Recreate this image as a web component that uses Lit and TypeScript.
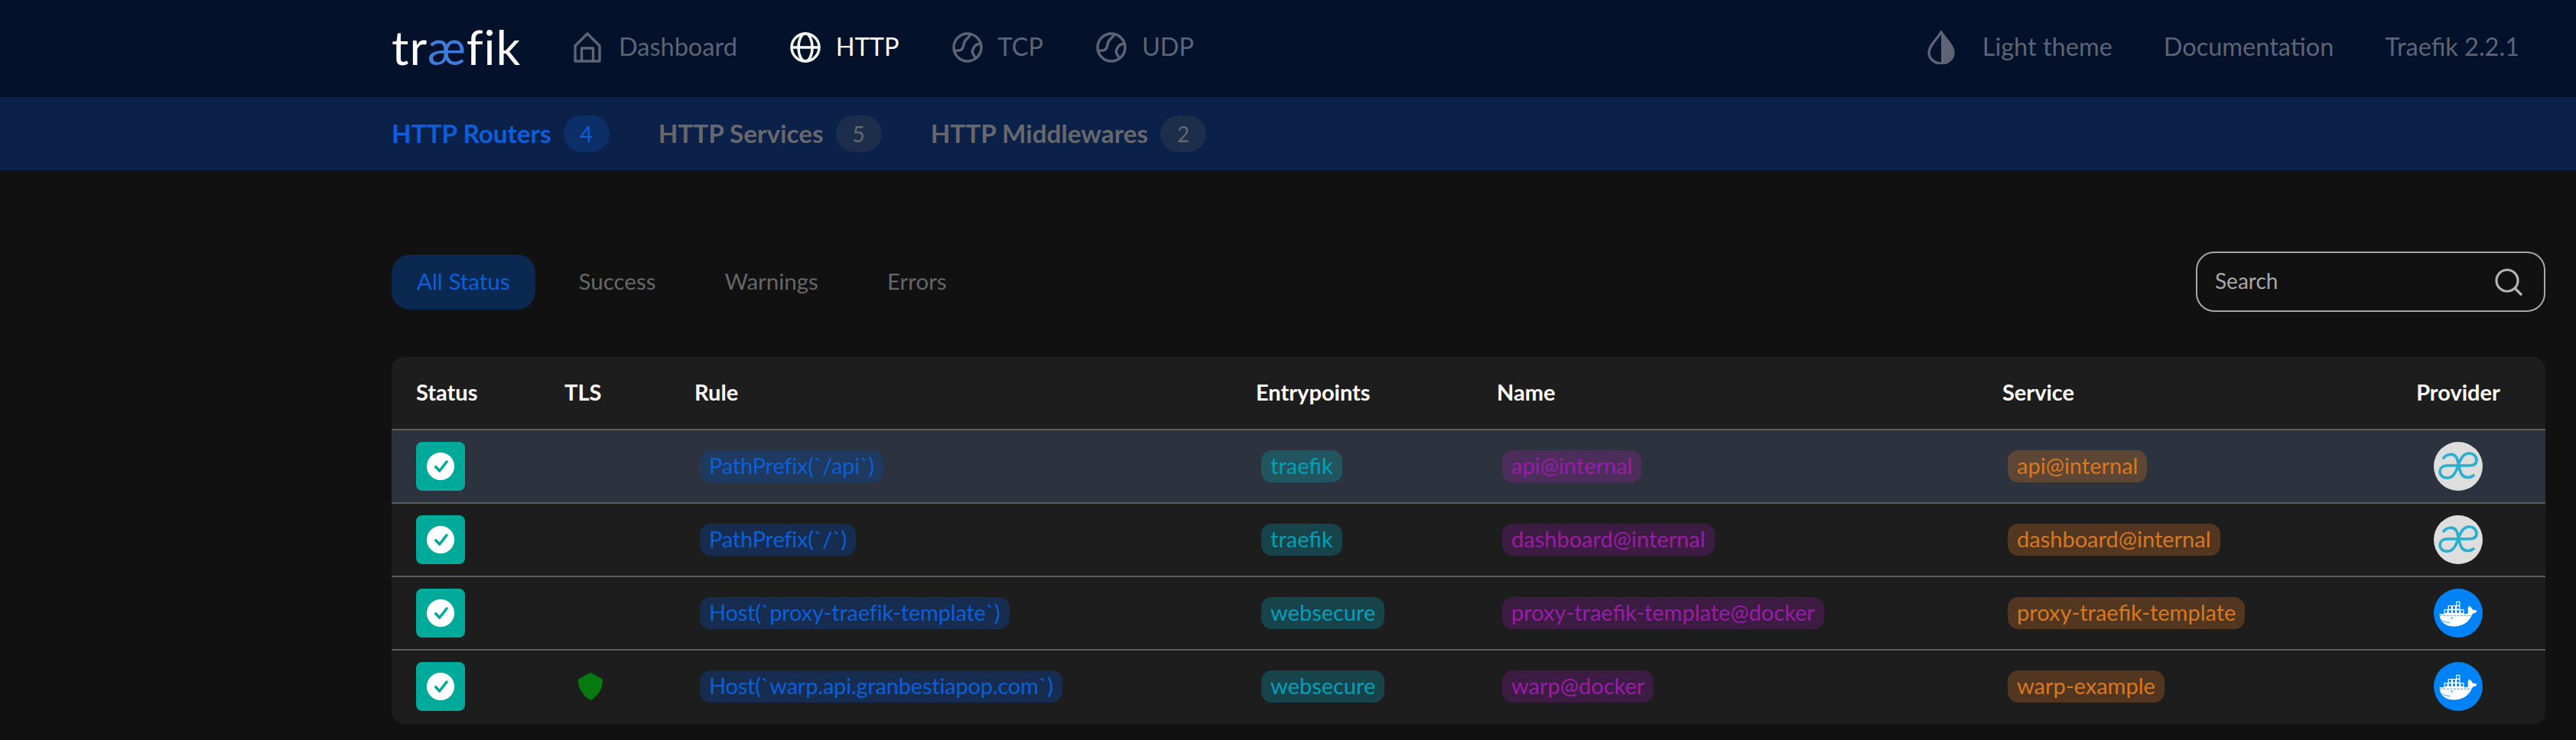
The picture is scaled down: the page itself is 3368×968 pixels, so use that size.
import { LitElement, css, html, svg } from "lit";
import { customElement } from "lit/decorators.js";

const homeIcon = svg`<svg class="nav-icon home" viewBox="0 0 36 40" fill="none" stroke="currentColor" stroke-width="3.4" stroke-linejoin="round"><path d="M2 38V18L18 2l16 16v20z"/><path d="M10.500 38V21h15v17"/></svg>`;
const globeIcon = svg`<svg class="nav-icon" viewBox="0 0 40 40" fill="none" stroke="currentColor" stroke-width="3.400"><circle cx="20" cy="20" r="18"/><ellipse cx="20" cy="20" rx="9" ry="18"/><path d="M2 20h36"/></svg>`;
const netIcon = svg`<svg class="nav-icon" viewBox="0 0 40 40" fill="none" stroke="currentColor" stroke-width="3.400"><circle cx="20" cy="20" r="18"/><path d="M24 2c-1 5-6 6-8 11s-1 8-4 10-7 1-10 1M38 16c-4-1-7 0-9 3s-4 6-2 9 2 4 3 5"/></svg>`;
const dropIcon = svg`<svg class="drop" viewBox="0 0 38 44" fill="none"><path d="M19 2C14 11 3 19 3 29a16 14 0 0 0 32 0C35 19 24 11 19 2z" stroke="currentColor" stroke-width="3.4"/><path d="M19 2c5 9 16 17 16 27a16 14 0 0 1-16 14z" fill="currentColor"/></svg>`;
const searchIcon = svg`<svg class="search-icon" viewBox="0 0 36 36" fill="none" stroke="#b5b5b5" stroke-width="3.2" stroke-linecap="round"><circle cx="16" cy="16" r="14"/><path d="M26 26l8 8"/></svg>`;
const checkIcon = svg`<svg class="check" viewBox="0 0 36 36"><circle cx="18" cy="18" r="18" fill="#fff"/><path d="M11.700 18.700l5 5.300 9.300-12" fill="none" stroke="#00aa9b" stroke-width="3.500" stroke-linecap="round" stroke-linejoin="round"/></svg>`;
const shieldIcon = svg`<svg class="shield" viewBox="0 0 34 36"><path d="M15.500.6a3 3 0 0 1 3 0l12.500 7c1.500.8 2 1.500 2 3 0 11-7 20-14 24.600a3 3 0 0 1-3 0C9 31 1 22 1 10.600c0-1.500.5-2.200 2-3z" fill="#067a0e"/></svg>`;
const internalIcon = svg`<svg class="avatar" viewBox="0 0 64 64"><circle cx="32" cy="32" r="32" fill="#dedede"/><g fill="none" stroke="#2aafce" stroke-width="3.700" stroke-linecap="round"><path d="M13 21C17 16 26 14 30 21C33 28 33 38 37 43C41 48 48 47 52 44"/><path d="M31 31H18C11 31 8 35 8 39C8 44 13 48 19 47C26 47 30 38 33 28C36 20 40 15 46 15C52 15 56 19 56 24C56 29 52 31 47 31H31z"/></g></svg>`;
const dockerIcon = svg`<svg class="avatar" viewBox="0 0 64 64"><circle cx="32" cy="32" r="32" fill="#0183f5"/><g fill="none" stroke="#fff" stroke-width="1.200"><path d="M29.600 17.300h4.200v4.700h-4.200zM19.200 22.500h4.200v4.700h-4.200zM24.400 22.500h4.200v4.700h-4.200zM29.600 22.500h4.200v4.700h-4.200zM14 27.700h4.200v4.700H14zM19.200 27.700h4.200v4.700h-4.200zM24.400 27.700h4.200v4.700h-4.200zM29.600 27.700h4.200v4.700h-4.200zM34.800 27.700H39v4.700h-4.200z"/></g><path fill="#fff" d="M7.500 33H42c2 0 3-1 3-2.500-.8-3-.5-5.500 1-8 2.500 1.200 4.200 3 5 5.500 2-.5 4 0 5.500 1.500-1 2-3 3-5.500 3-2.500 7-10 17-24 17-12 0-19-6-19.500-16.500z"/><path d="M8 35.200h44" fill="none" stroke="#0183f5" stroke-width=".8" stroke-dasharray="3 1.500"/><path d="M11 41.500c3 2 6 3 10 3" fill="none" stroke="#0183f5" stroke-width=".8"/><circle cx="23.700" cy="38.500" r="1" fill="#0183f5"/></svg>`;

type Row = { rule: string; entry: string; name: string; service: string; tls?: boolean; docker?: boolean; hot?: boolean };

const rows: Row[] = [
  { rule: "PathPrefix(`/api`)", entry: "traefik", name: "api@internal", service: "api@internal", hot: true },
  { rule: "PathPrefix(`/`)", entry: "traefik", name: "dashboard@internal", service: "dashboard@internal" },
  { rule: "Host(`proxy-traefik-template`)", entry: "websecure", name: "proxy-traefik-template@docker", service: "proxy-traefik-template", docker: true },
  { rule: "Host(`warp.api.granbestiapop.com`)", entry: "websecure", name: "warp@docker", service: "warp-example", tls: true, docker: true },
];

@customElement("app-root")
export class AppRoot extends LitElement {
  static styles = css`
    :host {
      display: block;
      min-height: 968px;
      background: #111111;
      font-family: "Lato", "Noto Sans", sans-serif;
      font-size: 29px;
      overflow: hidden;
    }
    .top {
      height: 127px;
      box-sizing: border-box;
      padding: 0 74px 4px 512px;
      background: #03112b;
      display: flex;
      align-items: center;
      color: #5d6475;
      font-size: 32.5px;
    }
    .lbl { padding-bottom: 3px; }
    .logo {
      font-size: 62.5px;
      line-height: 1;
      color: #fff;
      width: 238px;
      letter-spacing: 1px;
    }
    .logo span { color: #3f7bdc; }
    .nav-item {
      display: flex;
      align-items: center;
      gap: 20px;
      margin-right: 69px;
    }
    .nav-item.on { color: #fff; }
    .nav-icon { height: 40px; width: 40px; }
    .nav-icon.home { width: 36px; margin-right: 3px; }
    .right {
      margin-left: auto;
      display: flex;
      align-items: center;
      gap: 67px;
    }
    .theme { display: flex; align-items: center; gap: 35px; }
    .drop { width: 38px; height: 44px; }
    .sub {
      height: 96px;
      box-sizing: border-box;
      padding-left: 512px;
      background: #0b214a;
      display: flex;
      align-items: center;
      gap: 64px;
      color: #66686c;
      font-size: 33.3px;
      font-weight: 700;
    }
    .tab { display: flex; align-items: center; gap: 16px; }
    .count {
      width: 60px;
      height: 48px;
      border-radius: 24px;
      background: #1d2d4c;
      display: flex;
      align-items: center;
      justify-content: center;
      font-weight: 400;
      font-size: 28px;
    }
    .tab.on { color: #0b5fdb; }
    .tab.on .count { background: #0b2f66; }
    .filters {
      margin: 106px 40px 0 512px;
      display: flex;
      align-items: center;
      gap: 24px;
      height: 79px;
      color: #666;
      font-size: 29.5px;
    }
    .filter {
      padding: 0 33px 3px;
      height: 72px;
      box-sizing: border-box;
      display: flex;
      align-items: center;
    }
    .filter.on { color: #0b5fdb; background: #0a2850; border-radius: 24px; }
    .search {
      margin-left: auto;
      width: 457px;
      height: 79px;
      box-sizing: border-box;
      border: 2px solid #a8a8a8;
      border-radius: 24px;
      display: flex;
      align-items: center;
      justify-content: space-between;
      padding: 0 28px 0 23px;
      color: #a8a8a8;
      font-size: 28px;
    }
    .search-icon { width: 36px; height: 36px; }
    .table {
      margin: 59px 40px 0 512px;
      padding-bottom: 2px;
      background: #1d1d1d;
      border-radius: 16px;
      overflow: hidden;
    }
    .row {
      display: grid;
      grid-template-columns: 194px 170px 734px 315px 661px 542px 172px;
      align-items: center;
      height: 96px;
      border-top: 2px solid #5d5d5d;
      box-sizing: border-box;
    }
    .row.head { border-top: 0; height: 94px; color: #fff; font-weight: 700; }
    .row.head .cell { padding-bottom: 3px; }
    .row.hot { background: #2c333e; }
    .cell { padding-left: 32px; display: flex; align-items: center; min-width: 0; }
    .prov { padding-left: 0; justify-content: center; }
    .status {
      width: 64px;
      height: 64px;
      border-radius: 8px;
      background: #00aa9b;
      display: flex;
      align-items: center;
      justify-content: center;
    }
    .check { width: 36px; height: 36px; }
    .shield { width: 34px; height: 36px; margin-left: 17px; }
    .avatar { width: 64px; height: 64px; }
    .chip {
      margin-left: 7px;
      height: 42px;
      box-sizing: border-box;
      padding: 0 12px 3px;
      border-radius: 14px;
      display: flex;
      align-items: center;
      white-space: nowrap;
    }
    .blue { color: #0b5fdb; background: #162d50; letter-spacing: -0.2px; }
    .teal { color: #00a0b8; background: #17434b; }
    .purple { color: #9b1ba9; background: #3d1c44; }
    .orange { color: #d9771e; background: #533620; }
    .hot .blue { background: #1e3a60; }
    .hot .teal { background: #215661; }
    .hot .purple { background: #4d2d5b; }
    .hot .orange { background: #5e4634; }
  `;

  renderRow(r: Row) {
    return html`<div class="row ${r.hot ? "hot" : ""}">
      <div class="cell"><div class="status">${checkIcon}</div></div>
      <div class="cell">${r.tls ? shieldIcon : ""}</div>
      <div class="cell"><span class="chip blue">${r.rule}</span></div>
      <div class="cell"><span class="chip teal">${r.entry}</span></div>
      <div class="cell"><span class="chip purple">${r.name}</span></div>
      <div class="cell"><span class="chip orange">${r.service}</span></div>
      <div class="cell prov">${r.docker ? dockerIcon : internalIcon}</div>
    </div>`;
  }

  render() {
    return html`
      <div class="top">
        <div class="logo">tr<span>æ</span>fik</div>
        <div class="nav-item">${homeIcon}<span class="lbl">Dashboard</span></div>
        <div class="nav-item on">${globeIcon}<span class="lbl">HTTP</span></div>
        <div class="nav-item">${netIcon}<span class="lbl">TCP</span></div>
        <div class="nav-item">${netIcon}<span class="lbl">UDP</span></div>
        <div class="right">
          <div class="theme">${dropIcon}<span class="lbl">Light theme</span></div>
          <div class="lbl">Documentation</div>
          <div class="lbl">Traefik 2.2.1</div>
        </div>
      </div>
      <div class="sub">
        <div class="tab on"><span class="lbl">HTTP Routers</span><span class="count">4</span></div>
        <div class="tab"><span class="lbl">HTTP Services</span><span class="count">5</span></div>
        <div class="tab"><span class="lbl">HTTP Middlewares</span><span class="count">2</span></div>
      </div>
      <div class="filters">
        <div class="filter on">All Status</div>
        <div class="filter">Success</div>
        <div class="filter">Warnings</div>
        <div class="filter">Errors</div>
        <div class="search"><span class="lbl">Search</span>${searchIcon}</div>
      </div>
      <div class="table">
        <div class="row head">
          <div class="cell">Status</div>
          <div class="cell">TLS</div>
          <div class="cell">Rule</div>
          <div class="cell">Entrypoints</div>
          <div class="cell">Name</div>
          <div class="cell">Service</div>
          <div class="cell prov">Provider</div>
        </div>
        ${rows.map((r) => this.renderRow(r))}
      </div>
    `;
  }
}
